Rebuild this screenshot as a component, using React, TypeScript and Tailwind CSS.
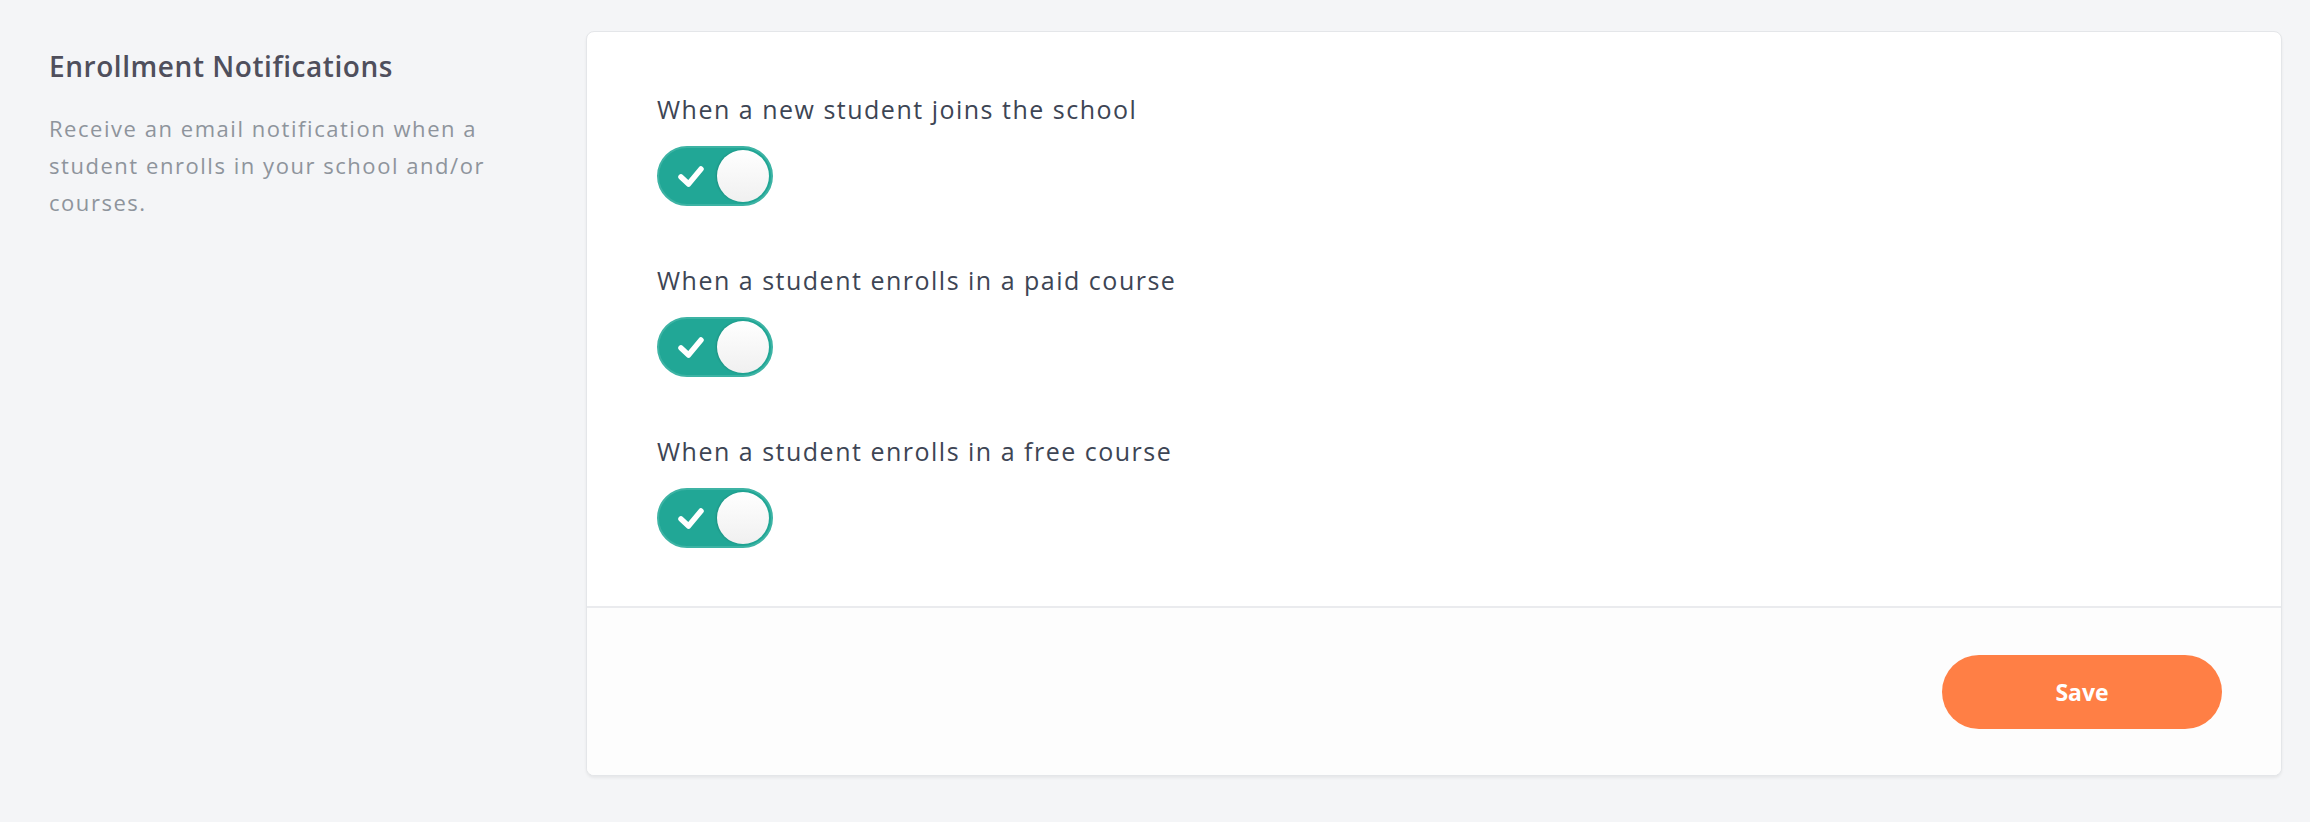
import { useState } from "react";

const options = [
  "When a new student joins the school",
  "When a student enrolls in a paid course",
  "When a student enrolls in a free course",
];

function Toggle({ on, onClick }: { on: boolean; onClick: () => void }) {
  return (
    <button
      type="button"
      onClick={onClick}
      className={`relative w-[116px] h-[60px] rounded-full border-2 ${on ? "bg-[#21a796] border-[#3db3a4]" : "bg-[#d9dce1] border-[#d0d3d8]"}`}
    >
      {on && (
        <svg className="absolute left-0 top-0" width="112" height="56" viewBox="0 0 112 56" fill="none">
          <path d="M22 29 L29.5 36 L42 21" stroke="white" strokeWidth="5.5" strokeLinecap="round" strokeLinejoin="round" />
        </svg>
      )}
      <span
        className={`absolute top-[2px] w-[52px] h-[52px] rounded-full bg-gradient-to-b from-white to-[#f0f0f0] shadow-[-1px_0_2px_rgba(0,0,0,0.15)] ${on ? "right-[2px]" : "left-[2px]"}`}
      />
    </button>
  );
}

export default function App() {
  const [values, setValues] = useState([true, true, true]);

  return (
    <div className="min-h-screen bg-[#f4f5f7] flex pt-[31px] pl-[49px] pr-[28px] pb-[46px]" style={{ fontFamily: "'Open Sans', Lato, sans-serif" }}>
      <div className="w-[537px] shrink-0 pr-[30px]">
        <h2 className="mt-[17px] text-[28px] leading-[36px] font-semibold tracking-[0.02em] text-[#4f4f5c]">Enrollment Notifications</h2>
        <p className="mt-[26px] text-[22px] leading-[37px] tracking-[0.07em] text-[#8e949c]">
          Receive an email notification when a student enrolls in your school and/or courses.
        </p>
      </div>

      <div className="flex-1 rounded-[8px] border border-[#e4e6e9] bg-white shadow-[0_2px_3px_rgba(0,0,0,0.06)] overflow-hidden">
        <div className="pl-[70px] pt-[61px] pb-[58px] flex flex-col gap-[58px]">
          {options.map((label, i) => (
            <div key={label} className="flex flex-col gap-[21px] items-start">
              <span className="text-[25px] leading-[32px] tracking-[0.06em] text-[#3d4554]">{label}</span>
              <Toggle on={values[i]} onClick={() => setValues(values.map((v, j) => (j === i ? !v : v)))} />
            </div>
          ))}
        </div>
        <div className="border-t-2 border-[#eaebee] bg-[#fdfdfd] flex justify-end pt-[47px] pb-[46px] pr-[59px]">
          <button type="button" className="w-[280px] h-[74px] rounded-full bg-[#ff7f45] text-white text-[23px] font-bold">
            Save
          </button>
        </div>
      </div>
    </div>
  );
}
